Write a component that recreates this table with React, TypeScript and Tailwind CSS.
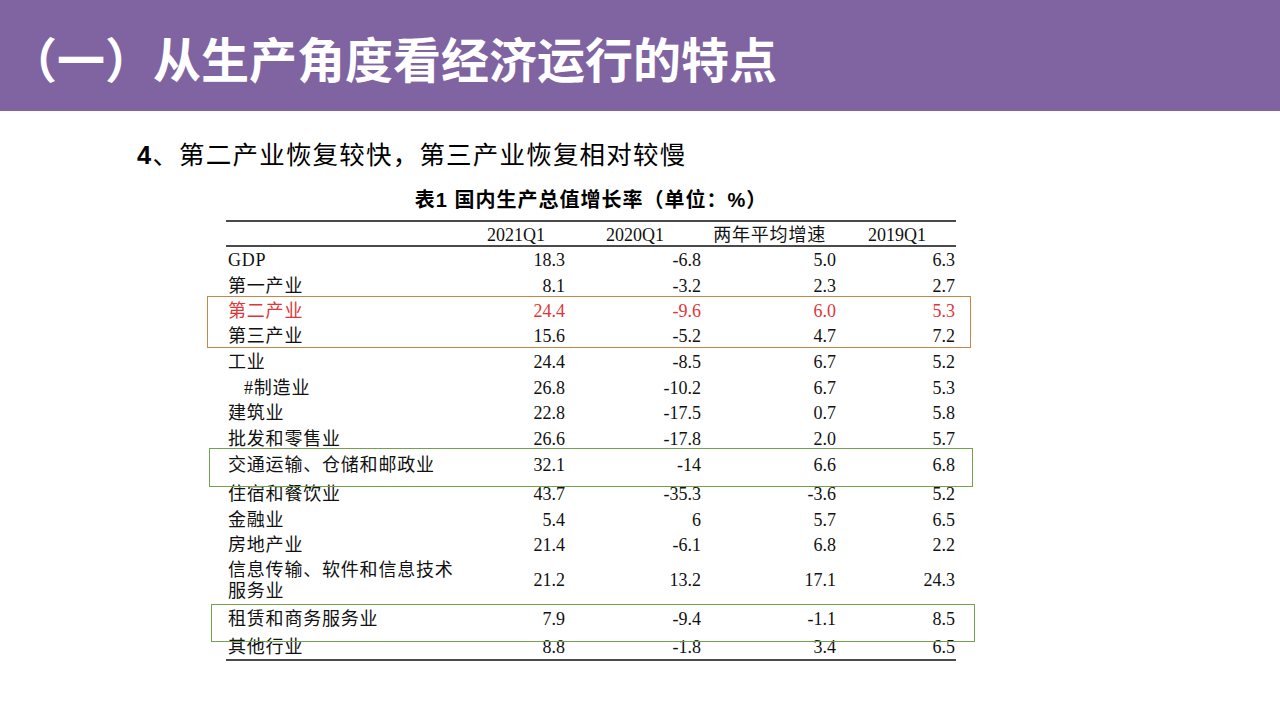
type Row = {
  label: string[];
  values: string[];
  h: string;
  red?: boolean;
  indent?: boolean;
};

const ROWS: Row[] = [
  { label: ["GDP"], values: ["18.3", "-6.8", "5.0", "6.3"], h: "h-[26px]" },
  { label: ["第一产业"], values: ["8.1", "-3.2", "2.3", "2.7"], h: "h-[25px]" },
  { label: ["第二产业"], values: ["24.4", "-9.6", "6.0", "5.3"], h: "h-[25px]", red: true },
  { label: ["第三产业"], values: ["15.6", "-5.2", "4.7", "7.2"], h: "h-[26px]" },
  { label: ["工业"], values: ["24.4", "-8.5", "6.7", "5.2"], h: "h-[26px]" },
  { label: ["#制造业"], values: ["26.8", "-10.2", "6.7", "5.3"], h: "h-[25px]", indent: true },
  { label: ["建筑业"], values: ["22.8", "-17.5", "0.7", "5.8"], h: "h-[26px]" },
  { label: ["批发和零售业"], values: ["26.6", "-17.8", "2.0", "5.7"], h: "h-[25px]" },
  { label: ["交通运输、仓储和邮政业"], values: ["32.1", "-14", "6.6", "6.8"], h: "h-[30px]" },
  { label: ["住宿和餐饮业"], values: ["43.7", "-35.3", "-3.6", "5.2"], h: "h-[26px]" },
  { label: ["金融业"], values: ["5.4", "6", "5.7", "6.5"], h: "h-[25px]" },
  { label: ["房地产业"], values: ["21.4", "-6.1", "6.8", "2.2"], h: "h-[25px]" },
  {
    label: ["信息传输、软件和信息技术", "服务业"],
    values: ["21.2", "13.2", "17.1", "24.3"],
    h: "h-[49px]",
  },
  { label: ["租赁和商务服务业"], values: ["7.9", "-9.4", "-1.1", "8.5"], h: "h-[28px]" },
  { label: ["其他行业"], values: ["8.8", "-1.8", "3.4", "6.5"], h: "h-[25px]" },
];

const COLS = "grid grid-cols-[244px_95px_136px_135px_120px]";

function DataRow({ row }: { row: Row }) {
  const color = row.red ? "text-[#e0363a]" : "text-[#111]";
  return (
    <div className={`${COLS} ${row.h} ${color} items-center pb-[2px]`}>
      <div
        className={`flex flex-col leading-[21px] tracking-[0.8px] ${row.indent ? "pl-[18px]" : "pl-[2px]"}`}
      >
        {row.label.map((l) => (
          <span key={l}>{l}</span>
        ))}
      </div>
      {row.values.map((v, i) => (
        <div key={i} className={`text-right ${i === 3 ? "pr-[1px]" : ""}`}>
          {v}
        </div>
      ))}
    </div>
  );
}

export default function App() {
  return (
    <div className="h-[720px] w-[1280px] overflow-hidden bg-white font-['Liberation_Serif','Noto_Sans_CJK_SC',serif]">
      <header className="flex h-[111px] items-center bg-[#8064a2] pl-[9px] pt-[3px]">
        <h1 className="font-['Noto_Sans_CJK_SC',sans-serif] text-[48px] leading-none font-bold text-white">
          （一）从生产角度看经济运行的特点
        </h1>
      </header>

      <p className="mt-[26px] pl-[137px] font-['Noto_Sans_CJK_SC',sans-serif] text-[25.5px] leading-[32px] tracking-[1.2px] text-black">
        <span className="font-['Liberation_Sans',sans-serif] font-bold">4</span>
        、第二产业恢复较快，第三产业恢复相对较慢
      </p>

      <div className="ml-[226px] w-[730px]">
        <p className="mt-[17px] text-center font-['Liberation_Sans','Noto_Sans_CJK_SC',sans-serif] text-[20px] leading-[24px] font-bold tracking-[1px] text-black">
          表1 国内生产总值增长率（单位：%）
        </p>

        <div className="relative mt-[8px] border-y-2 border-[#4a4a4a] text-[18px]">
          <div className={`${COLS} h-[25px] items-center border-b-2 border-[#4a4a4a] pb-[1px] text-[#111]`}>
            <div />
            <div className="pr-[20px] text-right">2021Q1</div>
            <div className="pr-[37px] text-right">2020Q1</div>
            <div className="pr-[10px] text-right tracking-[0.8px]">两年平均增速</div>
            <div className="pr-[30px] text-right">2019Q1</div>
          </div>

          {ROWS.map((r, i) => (
            <DataRow key={i} row={r} />
          ))}

          <div className="pointer-events-none absolute top-[74px] left-[-19px] h-[52px] w-[764px] border border-[#c8864d]" />
          <div className="pointer-events-none absolute top-[226px] left-[-17px] h-[39px] w-[764px] border border-[#72a250]" />
          <div className="pointer-events-none absolute top-[382px] left-[-15px] h-[38px] w-[764px] border border-[#72a250]" />
        </div>
      </div>
    </div>
  );
}
